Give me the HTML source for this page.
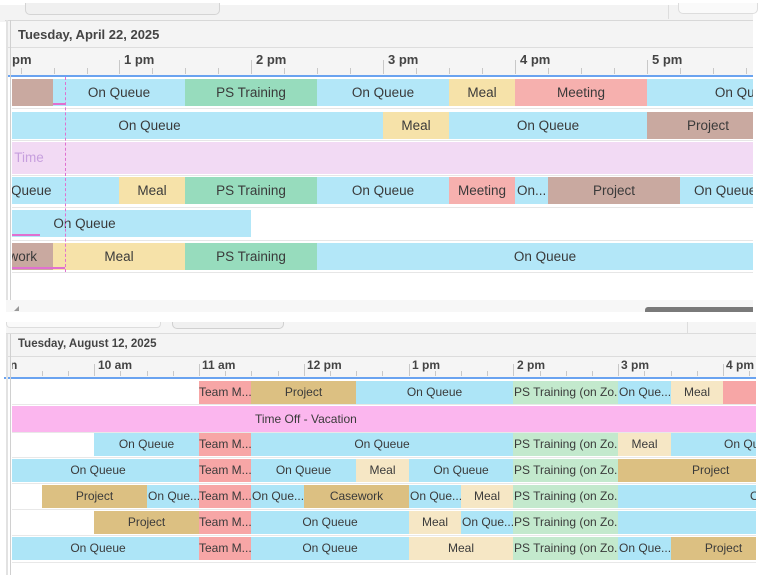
<!DOCTYPE html>
<html><head><meta charset="utf-8"><style>
*{margin:0;padding:0;box-sizing:border-box}
body{width:763px;height:575px;background:#fff;position:relative;overflow:hidden;font-family:"Liberation Sans",Arial,sans-serif;color:#3a3a3a}
.a{position:absolute}
.clip{position:absolute;overflow:hidden}
.b{position:absolute;white-space:nowrap;overflow:hidden;text-align:center;font-size:13.5px}
.s .b{font-size:12px}
.q{background:#b3e7f8}.g{background:#97dcbd}.m{background:#f6e2a9}.mt{background:#f6b0ae}.p{background:#c9a9a0}.pk{background:#f2daf4}
.q2{background:#ade5f7}.g2{background:#c3e9cd}.m2{background:#f6e7c5}.t2{background:#f7a6a6}.p2{background:#dcc082}.v2{background:#fbb6ee}
.tick{position:absolute;width:1px;background:#c8c8c8}
.lbl{position:absolute;font-weight:bold;font-size:12px;color:#444}
</style></head><body>

<!-- TOP SECTION -->
<div class="a" style="left:0;top:5px;width:753px;height:17px;background:#f3f3f3"></div>
<div class="a" style="left:25px;top:3px;width:195px;height:12px;background:#f0f0f0;border:1px solid #d4d4d4;border-top:none;border-radius:0 0 5px 5px"></div>
<div class="a" style="left:668px;top:5px;width:1px;height:14px;background:#ddd"></div>
<div class="a" style="left:678px;top:3px;width:80px;height:11px;background:#fafafa;border:1px solid #ddd;border-top:none;border-radius:0 0 5px 5px"></div>
<div class="a" style="left:5px;top:20px;width:748px;height:1px;background:#d8d8d8"></div>
<div class="a" style="left:6px;top:21px;width:747px;height:26px;background:#f4f4f4"></div>
<div class="a" style="left:18px;top:27px;font-weight:bold;font-size:13px;color:#444">Tuesday, April 22, 2025</div>
<div class="a" style="left:6px;top:47px;width:747px;height:1px;background:#ddd"></div>
<div class="a" style="left:6px;top:48px;width:747px;height:27px;background:#f5f5f5"></div>
<div class="a" style="left:6px;top:75px;width:747px;height:2px;background:#6aa3f0"></div>
<div class="a" style="left:6px;top:20px;width:2px;height:290px;background:#e2e2e2"></div>
<div class="a" style="left:10px;top:20px;width:1px;height:290px;background:#d0d0d0"></div>

<div class="clip" style="left:12px;top:48px;width:741px;height:262px">
 <div class="lbl" style="left:0;top:4px;font-size:13px">pm</div>
 <div class="lbl" style="left:112px;top:4px;font-size:13px">1 pm</div>
 <div class="lbl" style="left:244px;top:4px;font-size:13px">2 pm</div>
 <div class="lbl" style="left:376px;top:4px;font-size:13px">3 pm</div>
 <div class="lbl" style="left:508px;top:4px;font-size:13px">4 pm</div>
 <div class="lbl" style="left:640px;top:4px;font-size:13px">5 pm</div>
</div>
<div class="clip" style="left:12px;top:0;width:741px;height:310px" id="tt"></div>

<div class="clip" style="left:12px;top:0;width:741px;height:300px">
 <!-- ticks -->
 <div class="tick" style="left:9px;top:68px;height:6px"></div>
 <div class="tick" style="left:42px;top:68px;height:6px"></div>
 <div class="tick" style="left:75px;top:68px;height:6px"></div>
 <div class="tick" style="left:107px;top:60px;height:14px"></div>
 <div class="tick" style="left:140px;top:68px;height:6px"></div>
 <div class="tick" style="left:173px;top:68px;height:6px"></div>
 <div class="tick" style="left:206px;top:68px;height:6px"></div>
 <div class="tick" style="left:239px;top:60px;height:14px"></div>
 <div class="tick" style="left:272px;top:68px;height:6px"></div>
 <div class="tick" style="left:305px;top:68px;height:6px"></div>
 <div class="tick" style="left:338px;top:68px;height:6px"></div>
 <div class="tick" style="left:371px;top:60px;height:14px"></div>
 <div class="tick" style="left:404px;top:68px;height:6px"></div>
 <div class="tick" style="left:437px;top:68px;height:6px"></div>
 <div class="tick" style="left:470px;top:68px;height:6px"></div>
 <div class="tick" style="left:503px;top:60px;height:14px"></div>
 <div class="tick" style="left:536px;top:68px;height:6px"></div>
 <div class="tick" style="left:569px;top:68px;height:6px"></div>
 <div class="tick" style="left:602px;top:68px;height:6px"></div>
 <div class="tick" style="left:635px;top:60px;height:14px"></div>
 <div class="tick" style="left:668px;top:68px;height:6px"></div>
 <div class="tick" style="left:701px;top:68px;height:6px"></div>
 <div class="tick" style="left:734px;top:68px;height:6px"></div>

 <!-- row separators -->
 <div class="a" style="left:0;top:108px;width:741px;height:1px;background:#e6e6e6"></div>
 <div class="a" style="left:0;top:140px;width:741px;height:1px;background:#e6e6e6"></div>
 <div class="a" style="left:0;top:175px;width:741px;height:1px;background:#e6e6e6"></div>
 <div class="a" style="left:0;top:207px;width:741px;height:1px;background:#e6e6e6"></div>
 <div class="a" style="left:0;top:240px;width:741px;height:1px;background:#e6e6e6"></div>
 <div class="a" style="left:0;top:272px;width:741px;height:1px;background:#e6e6e6"></div>

 <!-- row1 y79 -->
 <div class="b p" style="left:-12px;top:79px;width:53px;height:27px"></div>
 <div class="b q" style="left:41px;top:79px;width:132px;height:27px;line-height:27px">On Queue</div>
 <div class="b g" style="left:173px;top:79px;width:132px;height:27px;line-height:27px">PS Training</div>
 <div class="b q" style="left:305px;top:79px;width:132px;height:27px;line-height:27px">On Queue</div>
 <div class="b m" style="left:437px;top:79px;width:66px;height:27px;line-height:27px">Meal</div>
 <div class="b mt" style="left:503px;top:79px;width:132px;height:27px;line-height:27px">Meeting</div>
 <div class="b q" style="left:635px;top:79px;width:198px;height:27px;line-height:27px">On Queue</div>
 <!-- row2 y112 -->
 <div class="b q" style="left:-120px;top:112px;width:491px;height:27px;line-height:27px;padding-left:24px">On Queue</div>
 <div class="b m" style="left:371px;top:112px;width:66px;height:27px;line-height:27px">Meal</div>
 <div class="b q" style="left:437px;top:112px;width:198px;height:27px;line-height:27px">On Queue</div>
 <div class="b p" style="left:635px;top:112px;width:122px;height:27px;line-height:27px">Project</div>
 <!-- row3 y142 -->
 <div class="b pk" style="left:0;top:142px;width:741px;height:32px;line-height:32px;text-align:left;color:#c79fde;text-indent:-8px">k Time</div>
 <!-- row4 y177 -->
 <div class="b q" style="left:0;top:177px;width:107px;height:27px;line-height:27px;text-align:left;text-indent:-1px">Queue</div>
 <div class="b m" style="left:107px;top:177px;width:66px;height:27px;line-height:27px">Meal</div>
 <div class="b g" style="left:173px;top:177px;width:132px;height:27px;line-height:27px">PS Training</div>
 <div class="b q" style="left:305px;top:177px;width:132px;height:27px;line-height:27px">On Queue</div>
 <div class="b mt" style="left:437px;top:177px;width:66px;height:27px;line-height:27px">Meeting</div>
 <div class="b q" style="left:503px;top:177px;width:33px;height:27px;line-height:27px;text-align:left;padding-left:2px">On...</div>
 <div class="b p" style="left:536px;top:177px;width:132px;height:27px;line-height:27px">Project</div>
 <div class="b q" style="left:668px;top:177px;width:132px;height:27px;line-height:27px;text-align:left;padding-left:14px">On Queue</div>
 <!-- row5 y210 -->
 <div class="b q" style="left:-94px;top:210px;width:333px;height:27px;line-height:27px">On Queue</div>
 <!-- row6 y243 -->
 <div class="b p" style="left:-30px;top:243px;width:71px;height:27px;line-height:27px;text-align:right;padding-right:16px">work</div>
 <div class="b m" style="left:41px;top:243px;width:132px;height:27px;line-height:27px">Meal</div>
 <div class="b g" style="left:173px;top:243px;width:132px;height:27px;line-height:27px">PS Training</div>
 <div class="b q" style="left:305px;top:243px;width:456px;height:27px;line-height:27px">On Queue</div>

 <!-- pink markers -->
 <div class="a" style="left:53px;top:77px;width:0;height:195px;border-left:1.5px dashed #e070d0"></div>
 <div class="a" style="left:41px;top:103px;width:12px;height:2px;background:#e070d0"></div>
 <div class="a" style="left:0;top:234px;width:28px;height:2px;background:#e070d0"></div>
 <div class="a" style="left:0;top:267px;width:53px;height:2px;background:#e070d0"></div>
</div>

<!-- scroll strip -->
<div class="a" style="left:6px;top:300px;width:747px;height:12px;background:#f7f7f7"></div>
<div class="a" style="left:645px;top:307px;width:108px;height:5px;background:#7a7a7a;border-radius:3px 0 0 0"></div>
<div class="a" style="left:14px;top:306px;width:0;height:0;border-left:5px solid transparent;border-bottom:5px solid #999"></div>

<!-- BOTTOM SECTION -->
<div class="a" style="left:6px;top:322px;width:750px;height:11px;background:#f5f5f5"></div>
<div class="a" style="left:6px;top:322px;width:155px;height:6px;border:1px solid #ddd;border-top:none;border-radius:0 0 4px 4px;background:#fafafa"></div>
<div class="a" style="left:172px;top:322px;width:112px;height:7px;border:1px solid #d0d0d0;border-top:none;border-radius:0 0 5px 5px;background:#f0f0f0"></div>
<div class="a" style="left:687px;top:322px;width:1px;height:11px;background:#ddd"></div>
<div class="a" style="left:6px;top:333px;width:750px;height:1px;background:#dcdcdc"></div>
<div class="a" style="left:6px;top:334px;width:750px;height:22px;background:#f4f4f4"></div>
<div class="a" style="left:18px;top:338px;font-weight:bold;font-size:11.5px;color:#444">Tuesday, August 12, 2025</div>
<div class="a" style="left:6px;top:356px;width:750px;height:1px;background:#dcdcdc"></div>
<div class="a" style="left:6px;top:357px;width:750px;height:20px;background:#f5f5f5"></div>
<div class="a" style="left:4px;top:377px;width:752px;height:2px;background:#6aa3f0"></div>
<div class="a" style="left:6px;top:334px;width:2px;height:241px;background:#e2e2e2"></div>
<div class="a" style="left:10px;top:334px;width:1px;height:241px;background:#d0d0d0"></div>

<div class="clip s" style="left:12px;top:334px;width:744px;height:241px">
 <div class="lbl" style="left:-2px;top:24px">n</div>
 <div class="lbl" style="left:86px;top:24px">10 am</div>
 <div class="lbl" style="left:190px;top:24px">11 am</div>
 <div class="lbl" style="left:295px;top:24px">12 pm</div>
 <div class="lbl" style="left:400px;top:24px">1 pm</div>
 <div class="lbl" style="left:505px;top:24px">2 pm</div>
 <div class="lbl" style="left:609px;top:24px">3 pm</div>
 <div class="lbl" style="left:714px;top:24px">4 pm</div>

 <div class="tick" style="left:30px;top:37px;height:5px"></div>
 <div class="tick" style="left:56px;top:37px;height:5px"></div>
 <div class="tick" style="left:82px;top:30px;height:12px"></div>
 <div class="tick" style="left:108px;top:37px;height:5px"></div>
 <div class="tick" style="left:135px;top:37px;height:5px"></div>
 <div class="tick" style="left:161px;top:37px;height:5px"></div>
 <div class="tick" style="left:187px;top:30px;height:12px"></div>
 <div class="tick" style="left:213px;top:37px;height:5px"></div>
 <div class="tick" style="left:239px;top:37px;height:5px"></div>
 <div class="tick" style="left:266px;top:37px;height:5px"></div>
 <div class="tick" style="left:292px;top:30px;height:12px"></div>
 <div class="tick" style="left:318px;top:37px;height:5px"></div>
 <div class="tick" style="left:344px;top:37px;height:5px"></div>
 <div class="tick" style="left:370px;top:37px;height:5px"></div>
 <div class="tick" style="left:397px;top:30px;height:12px"></div>
 <div class="tick" style="left:423px;top:37px;height:5px"></div>
 <div class="tick" style="left:449px;top:37px;height:5px"></div>
 <div class="tick" style="left:475px;top:37px;height:5px"></div>
 <div class="tick" style="left:501px;top:30px;height:12px"></div>
 <div class="tick" style="left:528px;top:37px;height:5px"></div>
 <div class="tick" style="left:554px;top:37px;height:5px"></div>
 <div class="tick" style="left:580px;top:37px;height:5px"></div>
 <div class="tick" style="left:606px;top:30px;height:12px"></div>
 <div class="tick" style="left:632px;top:37px;height:5px"></div>
 <div class="tick" style="left:659px;top:37px;height:5px"></div>
 <div class="tick" style="left:685px;top:37px;height:5px"></div>
 <div class="tick" style="left:711px;top:30px;height:12px"></div>
 <div class="tick" style="left:737px;top:37px;height:5px"></div>

 <!-- separators -->
 <div class="a" style="left:0;top:70px;width:744px;height:1px;background:#e8e8e8"></div>
 <div class="a" style="left:0;top:98px;width:744px;height:1px;background:#e8e8e8"></div>
 <div class="a" style="left:0;top:123px;width:744px;height:1px;background:#e8e8e8"></div>
 <div class="a" style="left:0;top:149px;width:744px;height:1px;background:#e8e8e8"></div>
 <div class="a" style="left:0;top:175px;width:744px;height:1px;background:#e8e8e8"></div>
 <div class="a" style="left:0;top:201px;width:744px;height:1px;background:#e8e8e8"></div>
 <div class="a" style="left:0;top:228px;width:744px;height:1px;background:#e8e8e8"></div>

 <!-- row1 y47 (381) -->
 <div class="b t2" style="left:187px;top:47px;width:52px;height:23px;line-height:23px">Team M...</div>
 <div class="b p2" style="left:239px;top:47px;width:105px;height:23px;line-height:23px">Project</div>
 <div class="b q2" style="left:344px;top:47px;width:157px;height:23px;line-height:23px">On Queue</div>
 <div class="b g2" style="left:501px;top:47px;width:105px;height:23px;line-height:23px;text-align:left;padding-left:1px">PS Training (on Zo...</div>
 <div class="b q2" style="left:606px;top:47px;width:53px;height:23px;line-height:23px;text-align:left;padding-left:1px">On Que...</div>
 <div class="b m2" style="left:659px;top:47px;width:52px;height:23px;line-height:23px">Meal</div>
 <div class="b t2" style="left:711px;top:47px;width:40px;height:23px"></div>
 <!-- row2 y72 (406) -->
 <div class="b v2" style="left:0;top:72px;width:744px;height:26px;line-height:26px;text-align:left;padding-left:243px">Time Off - Vacation</div>
 <!-- row3 y99 (433) -->
 <div class="b q2" style="left:82px;top:99px;width:105px;height:23px;line-height:23px">On Queue</div>
 <div class="b t2" style="left:187px;top:99px;width:52px;height:23px;line-height:23px">Team M...</div>
 <div class="b q2" style="left:239px;top:99px;width:262px;height:23px;line-height:23px">On Queue</div>
 <div class="b g2" style="left:501px;top:99px;width:105px;height:23px;line-height:23px;text-align:left;padding-left:1px">PS Training (on Zo...</div>
 <div class="b m2" style="left:606px;top:99px;width:53px;height:23px;line-height:23px">Meal</div>
 <div class="b q2" style="left:659px;top:99px;width:105px;height:23px;line-height:23px;text-align:left;padding-left:53px">On Queue</div>
 <!-- row4 y125 (459) -->
 <div class="b q2" style="left:0;top:125px;width:187px;height:23px;line-height:23px;padding-right:15px">On Queue</div>
 <div class="b t2" style="left:187px;top:125px;width:52px;height:23px;line-height:23px">Team M...</div>
 <div class="b q2" style="left:239px;top:125px;width:105px;height:23px;line-height:23px">On Queue</div>
 <div class="b m2" style="left:344px;top:125px;width:53px;height:23px;line-height:23px">Meal</div>
 <div class="b q2" style="left:397px;top:125px;width:104px;height:23px;line-height:23px">On Queue</div>
 <div class="b g2" style="left:501px;top:125px;width:105px;height:23px;line-height:23px;text-align:left;padding-left:1px">PS Training (on Zo...</div>
 <div class="b p2" style="left:606px;top:125px;width:190px;height:23px;line-height:23px;text-align:left;padding-left:74px">Project</div>
 <!-- row5 y151 (485) -->
 <div class="b p2" style="left:30px;top:151px;width:105px;height:23px;line-height:23px">Project</div>
 <div class="b q2" style="left:135px;top:151px;width:52px;height:23px;line-height:23px;text-align:left;padding-left:1px">On Que...</div>
 <div class="b t2" style="left:187px;top:151px;width:52px;height:23px;line-height:23px">Team M...</div>
 <div class="b q2" style="left:239px;top:151px;width:53px;height:23px;line-height:23px;text-align:left;padding-left:1px">On Que...</div>
 <div class="b p2" style="left:292px;top:151px;width:105px;height:23px;line-height:23px">Casework</div>
 <div class="b q2" style="left:397px;top:151px;width:52px;height:23px;line-height:23px;text-align:left;padding-left:1px">On Que...</div>
 <div class="b m2" style="left:449px;top:151px;width:52px;height:23px;line-height:23px">Meal</div>
 <div class="b g2" style="left:501px;top:151px;width:105px;height:23px;line-height:23px;text-align:left;padding-left:1px">PS Training (on Zo...</div>
 <div class="b q2" style="left:606px;top:151px;width:180px;height:23px;line-height:23px;text-align:left;padding-left:132px">On Queue</div>
 <!-- row6 y177 (511) -->
 <div class="b p2" style="left:82px;top:177px;width:105px;height:23px;line-height:23px">Project</div>
 <div class="b t2" style="left:187px;top:177px;width:52px;height:23px;line-height:23px">Team M...</div>
 <div class="b q2" style="left:239px;top:177px;width:158px;height:23px;line-height:23px">On Queue</div>
 <div class="b m2" style="left:397px;top:177px;width:52px;height:23px;line-height:23px">Meal</div>
 <div class="b q2" style="left:449px;top:177px;width:52px;height:23px;line-height:23px;text-align:left;padding-left:1px">On Que...</div>
 <div class="b g2" style="left:501px;top:177px;width:105px;height:23px;line-height:23px;text-align:left;padding-left:1px">PS Training (on Zo...</div>
 <div class="b q2" style="left:606px;top:177px;width:140px;height:23px"></div>
 <!-- row7 y203 (537) -->
 <div class="b q2" style="left:0;top:203px;width:187px;height:23px;line-height:23px;padding-right:15px">On Queue</div>
 <div class="b t2" style="left:187px;top:203px;width:52px;height:23px;line-height:23px">Team M...</div>
 <div class="b q2" style="left:239px;top:203px;width:158px;height:23px;line-height:23px">On Queue</div>
 <div class="b m2" style="left:397px;top:203px;width:104px;height:23px;line-height:23px">Meal</div>
 <div class="b g2" style="left:501px;top:203px;width:105px;height:23px;line-height:23px;text-align:left;padding-left:1px">PS Training (on Zo...</div>
 <div class="b q2" style="left:606px;top:203px;width:53px;height:23px;line-height:23px;text-align:left;padding-left:1px">On Que...</div>
 <div class="b p2" style="left:659px;top:203px;width:105px;height:23px;line-height:23px">Project</div>
</div>
</body></html>
